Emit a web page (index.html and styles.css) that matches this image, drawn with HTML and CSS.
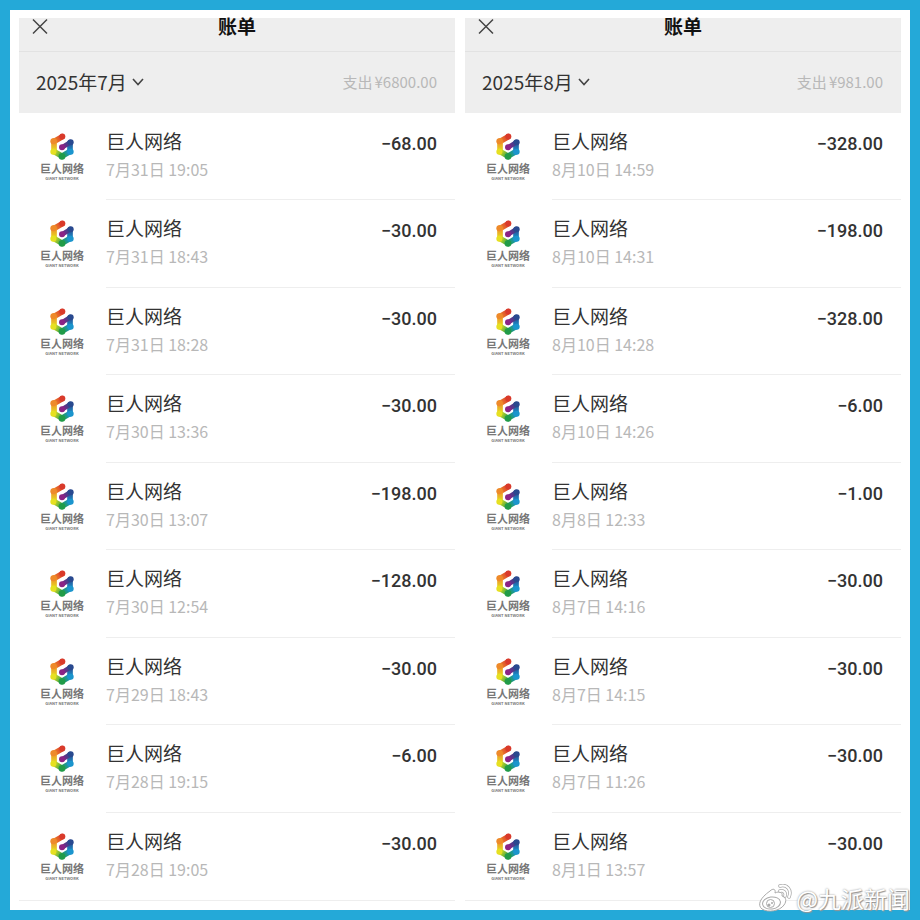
FILE: index.html
```
<!DOCTYPE html>
<html lang="zh-CN">
<head>
<meta charset="utf-8">
<title>账单</title>
<link rel="stylesheet" href="styles.css">
</head>
<body>
<svg class="defs" aria-hidden="true">
  <defs>
    <linearGradient id="g1" gradientUnits="userSpaceOnUse" x1="36" y1="9" x2="11" y2="23"><stop offset="0" stop-color="#d93a2b"/><stop offset="1" stop-color="#ee8a2a"/></linearGradient>
    <linearGradient id="g2" gradientUnits="userSpaceOnUse" x1="11" y1="23" x2="11" y2="55"><stop offset="0" stop-color="#ee8a2a"/><stop offset="1" stop-color="#e6e021"/></linearGradient>
    <linearGradient id="g3" gradientUnits="userSpaceOnUse" x1="11" y1="55" x2="36" y2="70"><stop offset="0" stop-color="#e6e021"/><stop offset="1" stop-color="#219b48"/></linearGradient>
    <linearGradient id="g4" gradientUnits="userSpaceOnUse" x1="36" y1="70" x2="61" y2="55"><stop offset="0" stop-color="#219b48"/><stop offset="1" stop-color="#1b95cd"/></linearGradient>
    <linearGradient id="g5" gradientUnits="userSpaceOnUse" x1="61" y1="55" x2="61" y2="27"><stop offset="0" stop-color="#1b95cd"/><stop offset="1" stop-color="#29498f"/></linearGradient>
    <linearGradient id="g6" gradientUnits="userSpaceOnUse" x1="61" y1="27" x2="36" y2="43"><stop offset="0" stop-color="#29498f"/><stop offset="1" stop-color="#8b2385"/></linearGradient>
    <symbol id="hex" viewBox="0 0 72 80">
      <g fill="none" stroke-width="17" stroke-linecap="round">
        <path d="M36 11L12 25" stroke="url(#g1)"/>
        <path d="M12 24L12.1 55" stroke="url(#g2)"/>
        <path d="M12 55L36 69" stroke="url(#g3)"/>
        <path d="M36 69L60 55" stroke="url(#g4)"/>
        <path d="M60 55L60.1 28" stroke="url(#g5)"/>
        <path d="M60 28L37 42" stroke="url(#g6)" stroke-width="14"/>
      </g>
      <circle cx="37" cy="10" r="9" fill="#d93a2b"/>
      <circle cx="10" cy="24" r="9" fill="#ee8a2a"/>
      <circle cx="10" cy="56" r="9" fill="#e6e021"/>
      <circle cx="36" cy="70" r="10" fill="#219b48"/>
      <circle cx="62" cy="56" r="9" fill="#1b95cd"/>
      <circle cx="62" cy="27" r="9" fill="#29498f"/>
      <circle cx="36" cy="42" r="9" fill="#8b2385"/>
    </symbol>
    <symbol id="close" viewBox="0 0 16 16"><path d="M1 1L15 15M15 1L1 15" fill="none" stroke="#444" stroke-width="1.5"/></symbol>
    <symbol id="down" viewBox="0 0 12 8"><path d="M1 1L6 6.500L11 1" fill="none" stroke="#444" stroke-width="1.600"/></symbol>
  </defs>
</svg>
<main class="frame">
  <section class="panel">
    <header class="bar"><button class="close" aria-label="关闭"><svg><use href="#close"/></svg></button><h1>账单</h1></header>
    <div class="month"><button class="pick">2025年7月<svg><use href="#down"/></svg></button><p class="total"><span>支出</span><span>¥6800.00</span></p></div>
    <ul class="list">
      <li><div class="logo"><svg><use href="#hex"/></svg><b>巨人网络</b><small>GIANT NETWORK</small></div><div class="body"><div><h2>巨人网络</h2><time>7月31日 19:05</time></div><span class="amount">−68.00</span></div></li>
      <li><div class="logo"><svg><use href="#hex"/></svg><b>巨人网络</b><small>GIANT NETWORK</small></div><div class="body"><div><h2>巨人网络</h2><time>7月31日 18:43</time></div><span class="amount">−30.00</span></div></li>
      <li><div class="logo"><svg><use href="#hex"/></svg><b>巨人网络</b><small>GIANT NETWORK</small></div><div class="body"><div><h2>巨人网络</h2><time>7月31日 18:28</time></div><span class="amount">−30.00</span></div></li>
      <li><div class="logo"><svg><use href="#hex"/></svg><b>巨人网络</b><small>GIANT NETWORK</small></div><div class="body"><div><h2>巨人网络</h2><time>7月30日 13:36</time></div><span class="amount">−30.00</span></div></li>
      <li><div class="logo"><svg><use href="#hex"/></svg><b>巨人网络</b><small>GIANT NETWORK</small></div><div class="body"><div><h2>巨人网络</h2><time>7月30日 13:07</time></div><span class="amount">−198.00</span></div></li>
      <li><div class="logo"><svg><use href="#hex"/></svg><b>巨人网络</b><small>GIANT NETWORK</small></div><div class="body"><div><h2>巨人网络</h2><time>7月30日 12:54</time></div><span class="amount">−128.00</span></div></li>
      <li><div class="logo"><svg><use href="#hex"/></svg><b>巨人网络</b><small>GIANT NETWORK</small></div><div class="body"><div><h2>巨人网络</h2><time>7月29日 18:43</time></div><span class="amount">−30.00</span></div></li>
      <li><div class="logo"><svg><use href="#hex"/></svg><b>巨人网络</b><small>GIANT NETWORK</small></div><div class="body"><div><h2>巨人网络</h2><time>7月28日 19:15</time></div><span class="amount">−6.00</span></div></li>
      <li><div class="logo"><svg><use href="#hex"/></svg><b>巨人网络</b><small>GIANT NETWORK</small></div><div class="body"><div><h2>巨人网络</h2><time>7月28日 19:05</time></div><span class="amount">−30.00</span></div></li>
    </ul>
  </section>
  <section class="panel">
    <header class="bar"><button class="close" aria-label="关闭"><svg><use href="#close"/></svg></button><h1>账单</h1></header>
    <div class="month"><button class="pick">2025年8月<svg><use href="#down"/></svg></button><p class="total"><span>支出</span><span>¥981.00</span></p></div>
    <ul class="list">
      <li><div class="logo"><svg><use href="#hex"/></svg><b>巨人网络</b><small>GIANT NETWORK</small></div><div class="body"><div><h2>巨人网络</h2><time>8月10日 14:59</time></div><span class="amount">−328.00</span></div></li>
      <li><div class="logo"><svg><use href="#hex"/></svg><b>巨人网络</b><small>GIANT NETWORK</small></div><div class="body"><div><h2>巨人网络</h2><time>8月10日 14:31</time></div><span class="amount">−198.00</span></div></li>
      <li><div class="logo"><svg><use href="#hex"/></svg><b>巨人网络</b><small>GIANT NETWORK</small></div><div class="body"><div><h2>巨人网络</h2><time>8月10日 14:28</time></div><span class="amount">−328.00</span></div></li>
      <li><div class="logo"><svg><use href="#hex"/></svg><b>巨人网络</b><small>GIANT NETWORK</small></div><div class="body"><div><h2>巨人网络</h2><time>8月10日 14:26</time></div><span class="amount">−6.00</span></div></li>
      <li><div class="logo"><svg><use href="#hex"/></svg><b>巨人网络</b><small>GIANT NETWORK</small></div><div class="body"><div><h2>巨人网络</h2><time>8月8日 12:33</time></div><span class="amount">−1.00</span></div></li>
      <li><div class="logo"><svg><use href="#hex"/></svg><b>巨人网络</b><small>GIANT NETWORK</small></div><div class="body"><div><h2>巨人网络</h2><time>8月7日 14:16</time></div><span class="amount">−30.00</span></div></li>
      <li><div class="logo"><svg><use href="#hex"/></svg><b>巨人网络</b><small>GIANT NETWORK</small></div><div class="body"><div><h2>巨人网络</h2><time>8月7日 14:15</time></div><span class="amount">−30.00</span></div></li>
      <li><div class="logo"><svg><use href="#hex"/></svg><b>巨人网络</b><small>GIANT NETWORK</small></div><div class="body"><div><h2>巨人网络</h2><time>8月7日 11:26</time></div><span class="amount">−30.00</span></div></li>
      <li><div class="logo"><svg><use href="#hex"/></svg><b>巨人网络</b><small>GIANT NETWORK</small></div><div class="body"><div><h2>巨人网络</h2><time>8月1日 13:57</time></div><span class="amount">−30.00</span></div></li>
    </ul>
  </section>
  <div class="watermark">
    <svg viewBox="0 0 34 28" aria-hidden="true">
      <g fill="#fff" stroke="#aaa" stroke-width="1">
        <path d="M12 7C15 4 18 5 17 9C21 7 25 8 24 12C28 13 29 17 26 21C22 27 10 29 4 25C-1 21 2 14 12 7Z"/>
        <ellipse cx="13.500" cy="19" rx="9" ry="6" transform="rotate(-8 13.500 19)"/>
        <circle cx="12.500" cy="19.500" r="4"/>
      </g>
      <circle cx="11" cy="21" r="1.500" fill="#aaa"/><circle cx="14" cy="19" r="1" fill="#aaa"/>
      <g fill="none" stroke-linecap="round"><path d="M22 2C29 0 34 6 31 13M22 7C26 6 28 9 27 12" stroke="#aaa" stroke-width="3.500"/><path d="M22 2C29 0 34 6 31 13M22 7C26 6 28 9 27 12" stroke="#fff" stroke-width="2"/></g>
    </svg>
    <span>@九派新闻</span>
  </div>
</main>
</body>
</html>
```

FILE: styles.css
```
* { box-sizing: border-box; margin: 0; padding: 0; }
body { font-family: "Noto Sans CJK SC", sans-serif; color: #333; background: #fff; }
button { border: 0; background: none; font: inherit; color: inherit; cursor: pointer; }
svg { display: block; }
.defs { position: absolute; width: 0; height: 0; }

.frame {
  position: relative;
  display: grid;
  grid-template-columns: 1fr 1fr;
  gap: 10px;
  min-height: 100vh;
  padding: 8px 9px;
  border: 10px solid #24a9d8;
  background: #fff;
}
.panel { display: flex; flex-direction: column; }

.bar {
  display: grid;
  grid-template-columns: 16px 1fr 16px;
  align-items: start;
  height: 34px;
  padding: 0 13px;
  background: #eee;
  border-bottom: 1px solid #e2e2e2;
}
.close svg { width: 16px; height: 17px; }
.bar h1 { font-size: 19px; line-height: 16px; font-weight: 700; color: #111; text-align: center; }

.month {
  display: flex;
  align-items: center;
  justify-content: space-between;
  height: 61px;
  padding: 0 18px 2px 17px;
  background: #eee;
}
.pick { display: flex; align-items: center; gap: 5px; font-size: 19px; line-height: 28px; }
.pick svg { width: 12px; height: 8px; }
.total { display: flex; gap: 2px; font-size: 15px; line-height: 24px; color: #b8b8b8; }

.list { flex: 1; display: flex; flex-direction: column; padding-bottom: 1px; list-style: none; }
.list li { flex: 1; display: flex; gap: 22px; padding-left: 21px; }
.list li:last-child { border-bottom: 1px solid #eee; }
.list li:last-child .body { border-bottom: 0; }
.logo { display: flex; flex-direction: column; align-items: center; width: 44px; padding-top: 20px; }
.logo svg { width: 24px; height: 27px; }
.logo b { font-size: 11px; line-height: 16px; font-weight: 700; color: #777; white-space: nowrap; }
.logo small { font-size: 4px; line-height: 4px; font-weight: 700; color: #777; white-space: nowrap; }
.body {
  flex: 1;
  display: flex;
  justify-content: space-between;
  padding: 14px 18px 0 0;
  border-bottom: 1px solid #eee;
}
.body h2 { font-size: 19px; line-height: 28px; font-weight: 400; }
.body time { display: block; font-size: 16px; line-height: 28px; color: #b8b8b8; }
.amount { font-family: Roboto, sans-serif; font-size: 18px; line-height: 34px; font-weight: 500; }

.watermark {
  position: absolute;
  right: 0;
  bottom: -2px;
  display: flex;
  align-items: center;
  gap: 4px;
  font-size: 23px;
  line-height: 28px;
  color: #fff;
  text-shadow: 0 0 2px #888, 1px 1px 1px #999;
}
.watermark svg { width: 34px; height: 28px; }
```
